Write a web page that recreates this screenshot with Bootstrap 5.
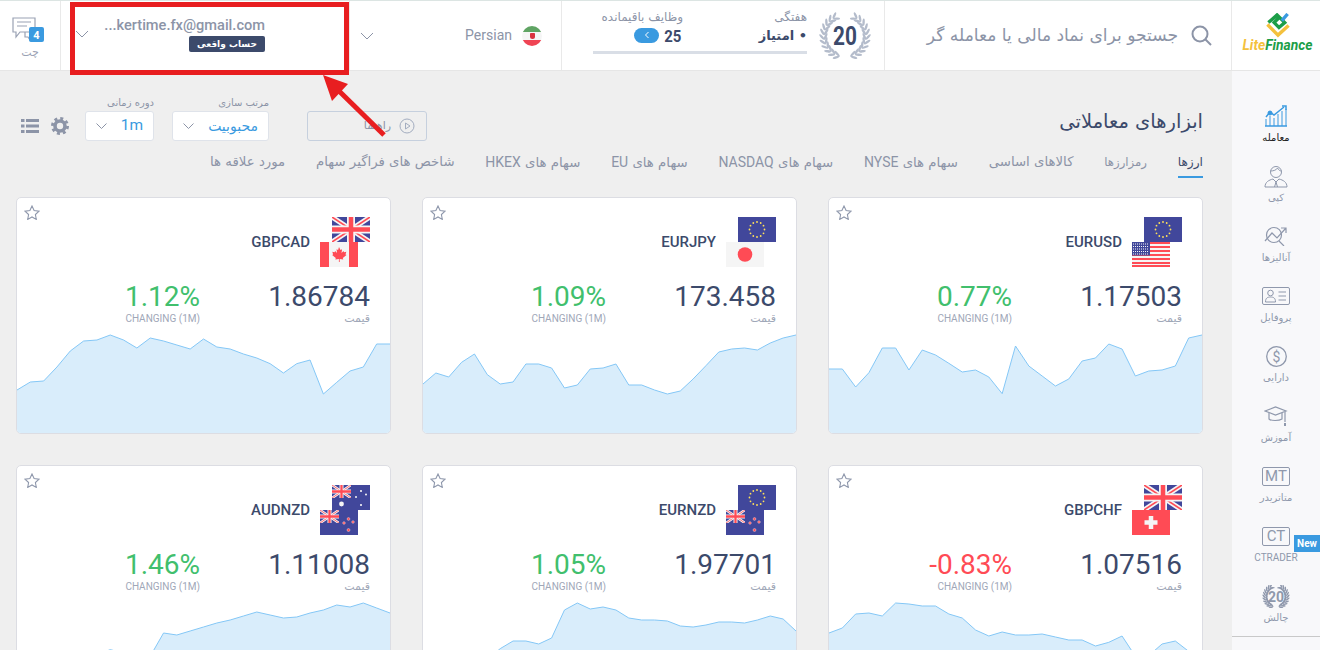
<!DOCTYPE html>
<html lang="fa">
<head>
    <meta charset="UTF-8">
    <title>LiteFinance</title>
    <link href="https://cdn.jsdelivr.net/npm/bootstrap@5.3.0/dist/css/bootstrap.min.css" rel="stylesheet">
    <style>
        html, body { height: 650px; overflow: hidden; }
        body { font-family: Roboto, "DejaVu Sans", sans-serif; background: #efefef; color: #3c4a6b; border-top: 1px solid #dce5e3; }
        .fa-txt { font-family: "DejaVu Sans", Roboto, sans-serif; }
        .latin-txt { font-family: Roboto, sans-serif; }

        /* header */
        .top-bar { height: 70px; background: #fff; border-bottom: 1px solid #e6e6e6; }
        .top-cell { border-right: 1px solid #e9e9e9; height: 100%; }
        .cell-chat { width: 61px; padding-top: 16px; }
        .cell-account { width: 289px; padding-left: 14px; padding-right: 84px; padding-bottom: 3px; }
        .cell-lang { width: 212px; padding-left: 10px; padding-right: 19px; }
        .cell-stats { width: 323px; padding: 9px 77px 0 31px; }
        .cell-search { width: 347px; padding-right: 19px; padding-left: 30px; gap: 13px; }
        .cell-logo { width: 88px; border-right: 0; padding-top: 12px; padding-left: 3px; }
        .chat-label { font-size: 11px; line-height: 14px; color: #9aa2b4; margin-top: 1px; }
        .chat-icon { width: 34px; height: 28px; margin-right: 4px; }
        .email-txt { font-size: 14.6px; font-weight: 500; color: #8c94a7; line-height: 18px; }
        .acc-tag { background: #3c4a6b; color: #fff; font-size: 9px; font-weight: 700; line-height: 16px; padding: 0 8px; border-radius: 2px; margin-top: 2px; }
        .lang-txt { font-size: 14px; color: #8c94a7; margin-right: 10px; }
        .flag-round { width: 20px; height: 20px; border-radius: 50%; background: linear-gradient(#5fa463 0 30%, #f5f5f5 30% 70%, #ef4454 70%); }
        .flag-mark { width: 5px; height: 6px; background: #d8323f; border-radius: 1px 1px 3px 3px; }
        .stat-small { font-size: 12px; line-height: 14px; color: #8c94a7; white-space: nowrap; }
        .stat-big { font-size: 13px; line-height: 20px; font-weight: 700; color: #3c4a6b; margin-top: 2px; }
        .stat-first { width: 124px; }
        .stat-num { display: inline-block; font-size: 17px; line-height: 20px; font-weight: 700; color: #3c4a6b; margin-top: 2px; transform: scaleX(.88); }
        .go-pill { width: 25px; height: 15px; border-radius: 8px; background: #3a9ae0; }
        .stat-track { height: 3px; background: #d9dee6; margin-top: 5px; }
        .wreath-box { width: 56px; height: 56px; right: 11px; top: 7px; }
        .wreath-num { font-size: 26px; font-weight: 700; color: #3c4a6b; line-height: 1; transform: scaleX(.8); }
        .search-txt { font-size: 17.1px; color: #8c94a7; white-space: nowrap; }
        .logo-txt { font-size: 13.8px; font-weight: 700; font-style: italic; line-height: 14px; margin-top: 0; }
        .logo-y { color: #f4c13d; }
        .logo-g { color: #1c9e48; }

        /* overlay */
        .red-frame { left: 70px; top: 2px; width: 279px; height: 73px; border: 5px solid #e81e20; }
        .red-arrow { left: 300px; top: 60px; width: 100px; height: 90px; }

        /* sidebar */
        .page-body { height: 579px; overflow: hidden; }
        .side-menu { width: 88px; background: #f8f8fa; padding-top: 30px; }
        .side-list { gap: 17px; padding-bottom: 12px; border-bottom: 1px solid #c9c9c9; }
        .side-item { height: 43px; color: #8f98ac; font-size: 10px; line-height: 13px; }
        .side-item.on { color: #222; }
        .side-ico { height: 30px; }
        .side-ico svg { display: block; }
        .term-box { width: 28px; height: 19px; border: 1px solid #8f98ac; border-radius: 2px; font-size: 15px; line-height: 17px; text-align: center; font-family: Roboto, sans-serif; }
        .new-tag { right: 0; top: 14px; width: 26px; height: 17px; background: #3a9ae0; color: #fff; font-size: 10px; font-weight: 700; line-height: 17px; text-align: center; font-family: Roboto, sans-serif; }

        /* main */
        .main-pane { width: 1232px; padding: 26px 29px 0 16px; }
        .tool-label { font-size: 10px; line-height: 12px; color: #8c94a7; margin-bottom: 2px; white-space: nowrap; }
        .tool-select { height: 30px; background: #fff; border: 1px solid #dfe3ea; border-radius: 3px; color: #3a9ae0; padding: 0 10px; }
        .list-ico { margin: 0 12px 8px 5px; }
        .gear-ico { margin: 0 16px 6px 0; }
        .sel-time { width: 69px; font-size: 15.5px; }
        .sel-sort { width: 97px; font-size: 14px; margin-left: 18px; }
        .help-btn { width: 120px; height: 30px; border: 1px solid #c6d0de; border-radius: 3px; margin-left: 38px; color: #8c94a7; font-size: 11px; padding-right: 11px; }
        .page-title { font-size: 19.5px; color: #3c4a6b; line-height: 30px; margin-top: 10px; }
        .tab-strip { gap: 30.8px; margin-top: 10px; font-size: 13.3px; }
        .tab-link { line-height: 20px; padding: 1px 0 3px; color: #8c94a7; border-bottom: 2px solid transparent; white-space: nowrap; }
        .tab-link .latin-txt { font-size: 14px; }
        .tab-link.on { color: #3c4a6b; border-bottom-color: #3a9ae0; }
        .tab-first { font-size: 12.2px; }
        .tab-second { font-size: 11.7px; }
        .card-grid { display: grid; grid-template-columns: repeat(3, 375px); gap: 31px; margin-top: 19px; }
        .inst-card { height: 237px; background: #fff; border: 1px solid #dcdde3; border-radius: 5px; overflow: hidden; }
        .inst-star { left: 7px; top: 7px; }
        .inst-head { padding: 19px 20px 0 0; gap: 10px; height: 69px; }
        .inst-name { font-size: 15px; font-weight: 500; color: #3c4a6b; }
        .flag-pair { width: 50px; height: 50px; }
        .flag-pair svg { display: block; width: 38px; height: 25px; }
        .inst-vals { padding: 13px 20px 0 0; height: 66px; }
        .inst-col { width: 170px; }
        .inst-num { font-size: 28px; line-height: 33px; color: #3c4a6b; }
        .inst-cap { font-size: 10px; line-height: 14px; color: #a0a7b8; margin-top: -1px; }
        .inst-cap.fa-txt { font-size: 11px; }
        .inst-chg { font-size: 28px; line-height: 33px; }
        .chg-up { color: #41bf6d; }
        .chg-down { color: #ff4b55; }
        .inst-chart { display: block; width: 100%; height: 100px; }
    </style>
</head>
<body>
    <!-- flag sprites -->
    <svg class="d-none" xmlns="http://www.w3.org/2000/svg">
        <symbol id="f-uj" viewBox="0 0 38 25" preserveAspectRatio="none">
            <rect width="38" height="25" fill="#41479b"/>
            <path d="M0 0L38 25M38 0L0 25" stroke="#f5f5f5" stroke-width="5"/>
            <path d="M0 0L38 25M38 0L0 25" stroke="#ff4b55" stroke-width="1.6"/>
            <path d="M19 0V25M0 12.5H38" stroke="#f5f5f5" stroke-width="8"/>
            <path d="M19 0V25M0 12.5H38" stroke="#ff4b55" stroke-width="4.5"/>
        </symbol>
        <symbol id="f-eu" viewBox="0 0 38 25">
            <rect width="38" height="25" fill="#41479b"/>
            <g fill="#ffe15a">
                <circle cx="19" cy="5" r=".9"/><circle cx="22.7" cy="6" r=".9"/><circle cx="25.5" cy="8.7" r=".9"/><circle cx="26.5" cy="12.5" r=".9"/>
                <circle cx="25.5" cy="16.3" r=".9"/><circle cx="22.7" cy="19" r=".9"/><circle cx="19" cy="20" r=".9"/><circle cx="15.3" cy="19" r=".9"/>
                <circle cx="12.5" cy="16.3" r=".9"/><circle cx="11.5" cy="12.5" r=".9"/><circle cx="12.5" cy="8.7" r=".9"/><circle cx="15.3" cy="6" r=".9"/>
            </g>
        </symbol>
        <symbol id="f-us" viewBox="0 0 38 25">
            <rect width="38" height="25" fill="#f5f5f5"/>
            <path d="M0 1H38M0 5H38M0 9H38M0 13H38M0 17H38M0 21H38M0 24H38" stroke="#ff4b55" stroke-width="2"/>
            <rect width="18" height="13.5" fill="#41479b"/>
            <path d="M1 2H17M1 4.5H17M1 7H17M1 9.5H17M1 12H17" stroke="#f5f5f5" stroke-width="1" stroke-dasharray="1 1"/>
        </symbol>
        <symbol id="f-jp" viewBox="0 0 38 25">
            <rect width="38" height="25" fill="#f5f5f5"/>
            <circle cx="19" cy="12.5" r="7.3" fill="#ff4b55"/>
        </symbol>
        <symbol id="f-ca" viewBox="0 0 38 25">
            <rect width="38" height="25" fill="#f5f5f5"/>
            <rect width="9" height="25" fill="#ff4b55"/><rect x="29" width="9" height="25" fill="#ff4b55"/>
            <path d="M19 5l1.500 3 1.600-.8-.6 3.700 2-2 .5 1.300 2.300-.4-.8 2.600 1 .6-3.700 3 .5 1.500-3.600-.5V20h-.8v-3l-3.600.5.500-1.500-3.700-3 1-.6-.8-2.600 2.300.4.500-1.300 2 2-.6-3.700 1.600.8z" fill="#ff4b55"/>
        </symbol>
        <symbol id="f-ch" viewBox="0 0 38 25">
            <rect width="38" height="25" fill="#ff4b55"/>
            <path d="M19 6V19M12.5 12.5H25.5" stroke="#f5f5f5" stroke-width="4.5"/>
        </symbol>
        <symbol id="f-nz" viewBox="0 0 38 25">
            <rect width="38" height="25" fill="#41479b"/>
            <use href="#f-uj" width="19" height="13"/>
            <g fill="#ff4b55" stroke="#f5f5f5" stroke-width=".4">
                <circle cx="28.5" cy="9" r="1.4"/><circle cx="24" cy="13" r="1.3"/><circle cx="33" cy="12" r="1.3"/><circle cx="28.5" cy="20" r="1.5"/>
            </g>
        </symbol>
        <symbol id="f-au" viewBox="0 0 38 25">
            <rect width="38" height="25" fill="#41479b"/>
            <use href="#f-uj" width="19" height="13"/>
            <g fill="#f5f5f5">
                <circle cx="9.5" cy="19" r="2.4"/><circle cx="29" cy="6" r="1.1"/><circle cx="24" cy="12" r="1"/><circle cx="34" cy="9.5" r="1"/><circle cx="29" cy="20" r="1.1"/>
            </g>
        </symbol>
    </svg>

    <!-- Header -->
    <header class="top-bar d-flex">
        <div class="top-cell cell-chat d-flex flex-column align-items-center">
            <svg class="chat-icon" viewBox="0 0 34 28" fill="none" stroke="#9aa2b4" stroke-width="1.200">
                <path d="M2 1h22v14H9l-4 5v-5H2z" fill="#fff"/>
                <path d="M6 5h14M6 9h10"/>
                <path d="M14 15v5h3l2 3v-3h12v-8h-6"/>
                <rect x="18" y="10" width="15" height="15" rx="2" fill="#3a9ae0" stroke="none"/>
                <text x="25.500" y="22" font-size="11" font-weight="700" fill="#fff" stroke="none" text-anchor="middle" font-family="Roboto">4</text>
            </svg>
            <div class="chat-label fa-txt">چت</div>
        </div>
        <div class="top-cell cell-account d-flex align-items-center">
            <svg width="14" height="8" viewBox="0 0 14 8" fill="none" stroke="#8c94a7" class="me-auto"><path d="M1 1l6 6 6-6"/></svg>
            <div class="d-flex flex-column align-items-end">
                <div class="email-txt">...kertime.fx@gmail.com</div>
                <div class="acc-tag fa-txt" dir="rtl">حساب واقعی</div>
            </div>
        </div>
        <div class="top-cell cell-lang d-flex align-items-center">
            <svg width="14" height="8" viewBox="0 0 14 8" fill="none" stroke="#8c94a7" class="me-auto"><path d="M1 1l6 6 6-6"/></svg>
            <span class="lang-txt">Persian</span>
            <span class="flag-round d-flex align-items-center justify-content-center"><span class="flag-mark"></span></span>
        </div>
        <div class="top-cell cell-stats d-flex position-relative">
            <div class="flex-grow-1 d-flex flex-column">
                <div class="d-flex" dir="rtl">
                    <div class="stat-first">
                        <div class="stat-small fa-txt">هفتگی</div>
                        <div class="stat-big fa-txt">• امتیاز</div>
                    </div>
                    <div>
                        <div class="stat-small fa-txt">وظایف باقیمانده</div>
                        <div class="d-flex align-items-center gap-1">
                            <span class="stat-num">25</span>
                            <span class="go-pill d-flex align-items-center justify-content-center">
                                <svg width="6" height="8" viewBox="0 0 6 8" fill="none" stroke="#fff"><path d="M4.500 1L1.500 4l3 3"/></svg>
                            </span>
                        </div>
                    </div>
                </div>
                <div class="stat-track"></div>
            </div>
            <div class="wreath-box position-absolute d-flex align-items-center justify-content-center">
                <svg class="position-absolute" width="56" height="56" viewBox="0 0 56 56" id="topWreath"></svg>
                <span class="wreath-num position-relative">20</span>
            </div>
        </div>
        <div class="top-cell cell-search d-flex align-items-center justify-content-end">
            <span class="search-txt fa-txt" dir="rtl">جستجو برای نماد مالی یا معامله گر</span>
            <svg width="21" height="21" viewBox="0 0 21 21" fill="none" stroke="#8c94a7" stroke-width="2"><circle cx="9" cy="9" r="7.500"/><path d="M14.500 14.500L20 20"/></svg>
        </div>
        <div class="top-cell cell-logo d-flex flex-column align-items-center">
            <svg width="28" height="25" viewBox="0 0 28 26" fill="none" stroke-width="3.500">
                <path d="M3 12l11 11 11-10" stroke="#f4c13d"/>
                <path d="M4 10l9-8 8 8-6 5-5-5 5-5" stroke="#1c9e48"/>
                <path d="M18 8l6-7" stroke="#3a9ae0"/>
            </svg>
            <div class="logo-txt"><span class="logo-y">Lite</span><span class="logo-g">Finance</span></div>
        </div>
    </header>

    <div class="page-body d-flex">
        <main class="main-pane">
            <div class="d-flex align-items-start justify-content-between">
                <div class="d-flex align-items-end">
                    <svg width="18" height="14" viewBox="0 0 18 14" fill="#8c94a7" class="list-ico">
                        <rect width="3.500" height="3"/><rect x="5" width="13" height="3"/>
                        <rect y="5.500" width="3.500" height="3"/><rect x="5" y="5.500" width="13" height="3"/>
                        <rect y="11" width="3.500" height="3"/><rect x="5" y="11" width="13" height="3"/>
                    </svg>
                    <svg width="18" height="18" viewBox="0 0 18 18" fill="none" stroke="#8c94a7" class="gear-ico">
                        <circle cx="9" cy="9" r="5" stroke-width="3.600"/>
                        <circle cx="9" cy="9" r="7.600" stroke-width="2.800" stroke-dasharray="3 2.970"/>
                    </svg>
                    <div>
                        <div class="tool-label fa-txt text-end">دوره زمانی</div>
                        <div class="tool-select sel-time d-flex align-items-center justify-content-between">
                            <svg width="11" height="6" viewBox="0 0 11 6" fill="none" stroke="#8c94a7"><path d="M.5.5l5 5 5-5"/></svg>
                            <span>1m</span>
                        </div>
                    </div>
                    <div>
                        <div class="tool-label fa-txt text-end">مرتب سازی</div>
                        <div class="tool-select sel-sort d-flex align-items-center justify-content-between">
                            <svg width="11" height="6" viewBox="0 0 11 6" fill="none" stroke="#8c94a7"><path d="M.5.5l5 5 5-5"/></svg>
                            <span class="fa-txt">محبوبیت</span>
                        </div>
                    </div>
                    <div class="help-btn d-flex align-items-center justify-content-end gap-2">
                        <span class="fa-txt">راهنما</span>
                        <svg width="16" height="16" viewBox="0 0 16 16" fill="none" stroke="#a3adc0"><circle cx="8" cy="8" r="7"/><path d="M6.500 5v6l4.500-3z"/></svg>
                    </div>
                </div>
                <div class="page-title fa-txt" dir="rtl">ابزارهای معاملاتی</div>
            </div>

            <nav class="tab-strip d-flex fa-txt" dir="rtl">
                <span class="tab-link tab-first on">ارزها</span>
                <span class="tab-link tab-second">رمزارزها</span>
                <span class="tab-link">کالاهای اساسی</span>
                <span class="tab-link">سهام های <span class="latin-txt">NYSE</span></span>
                <span class="tab-link">سهام های <span class="latin-txt">NASDAQ</span></span>
                <span class="tab-link">سهام های <span class="latin-txt">EU</span></span>
                <span class="tab-link">سهام های <span class="latin-txt">HKEX</span></span>
                <span class="tab-link">شاخص های فراگیر سهام</span>
                <span class="tab-link">مورد علاقه ها</span>
            </nav>

            <div class="card-grid" dir="rtl" id="cardGrid"></div>
        </main>

        <aside class="side-menu">
            <div class="side-list d-flex flex-column fa-txt">
                <div class="side-item on d-flex flex-column align-items-center">
                    <div class="side-ico d-flex align-items-center">
                        <svg width="24" height="22" viewBox="0 0 24 22" fill="none" stroke="#3a9ae0">
                            <path d="M2 21V14M6 21V11M10 21V13M14 21V9M18 21V6M22 21V4"/>
                            <path d="M1 21H23" stroke-width="1.500"/>
                            <path d="M2 12l4-5 4 3 10-8" stroke-width="1.500"/>
                            <path d="M18 1h4v4" stroke-width="1.500"/>
                            <circle cx="6" cy="8" r="2" fill="#3a9ae0"/>
                        </svg>
                    </div>
                    <div>معامله</div>
                </div>
                <div class="side-item d-flex flex-column align-items-center">
                    <div class="side-ico d-flex align-items-center">
                        <svg width="24" height="23" viewBox="0 0 24 23" fill="none" stroke="#8f98ac">
                            <circle cx="12" cy="7" r="5.500"/>
                            <path d="M6.500 6c3 0 6-1 7-3 1 2 2.500 3 4 3"/>
                            <path d="M1 22c0-5 4-7 8-8l3 3 3-3c4 1 8 3 8 8z"/>
                            <path d="M12 17l-1.500 5M12 17l1.500 5"/>
                        </svg>
                    </div>
                    <div>کپی</div>
                </div>
                <div class="side-item d-flex flex-column align-items-center">
                    <div class="side-ico d-flex align-items-center">
                        <svg width="24" height="20" viewBox="0 0 24 20" fill="none" stroke="#8f98ac" stroke-width="1.200">
                            <circle cx="10" cy="9" r="7.500"/>
                            <path d="M1 15l7-8 5 5 9-10M17 2h5v5M15 15l5 5"/>
                        </svg>
                    </div>
                    <div>آنالیزها</div>
                </div>
                <div class="side-item d-flex flex-column align-items-center">
                    <div class="side-ico d-flex align-items-center">
                        <svg width="28" height="18" viewBox="0 0 28 18" fill="none" stroke="#8f98ac">
                            <rect x=".5" y=".5" width="27" height="17" rx="1.500"/>
                            <circle cx="8.500" cy="6" r="2.800"/>
                            <path d="M3.500 15c0-4 2-5 5-5s5 1 5 5z"/>
                            <path d="M16.500 5H24M16.500 9H24M16.500 13H24"/>
                        </svg>
                    </div>
                    <div>پروفایل</div>
                </div>
                <div class="side-item d-flex flex-column align-items-center">
                    <div class="side-ico d-flex align-items-center">
                        <svg width="21" height="21" viewBox="0 0 21 21" fill="none" stroke="#8f98ac" stroke-width="1.300">
                            <circle cx="10.500" cy="10.500" r="9.800"/>
                            <text x="10.500" y="15.500" font-size="14" text-anchor="middle" fill="#8f98ac" stroke="none" font-family="Roboto">$</text>
                        </svg>
                    </div>
                    <div>دارایی</div>
                </div>
                <div class="side-item d-flex flex-column align-items-center">
                    <div class="side-ico d-flex align-items-center">
                        <svg width="24" height="21" viewBox="0 0 24 21" fill="none" stroke="#8f98ac" stroke-width="1.200">
                            <path d="M1 5l10.500-4L22 5l-10.500 4z"/>
                            <path d="M5 7v6c2 2 10 2 13 0V7"/>
                            <path d="M21 6v10"/><path d="M21 17v3" stroke-width="2"/>
                        </svg>
                    </div>
                    <div>آموزش</div>
                </div>
                <div class="side-item d-flex flex-column align-items-center">
                    <div class="side-ico d-flex align-items-center"><div class="term-box">MT</div></div>
                    <div>متاتریدر</div>
                </div>
                <div class="side-item d-flex flex-column align-items-center position-relative">
                    <div class="side-ico d-flex align-items-center"><div class="term-box">CT</div></div>
                    <div class="latin-txt">CTRADER</div>
                    <span class="new-tag position-absolute">New</span>
                </div>
                <div class="side-item d-flex flex-column align-items-center">
                    <div class="side-ico d-flex align-items-center">
                        <svg width="30" height="23" viewBox="0 0 30 23" id="sideWreath">
                            <text x="15" y="17" font-size="14" font-weight="700" text-anchor="middle" fill="#8f98ac" font-family="Roboto">20</text>
                        </svg>
                    </div>
                    <div>چالش</div>
                </div>
            </div>
        </aside>
    </div>

    <!-- annotation over the account cell -->
    <div class="red-frame position-absolute"></div>
    <svg class="red-arrow position-absolute" viewBox="300 60 100 90">
        <path d="M384 135L338 90" stroke="#e81e20" stroke-width="5"/>
        <polygon points="323,75 348,84 332,101" fill="#e81e20"/>
    </svg>

    <script>
        // zoomed-crop pixel values: x is spread evenly, y is read from the reference at 3x
        const cards = [
            { name: 'EURUSD', a: 'eu', b: 'us', price: '1.17503', chg: '0.77%', up: true,
              ys: [538,538,592,549,475,475,541,481,496,521,547,541,562,612,469,529,559,589,568,514,505,463,478,559,544,541,529,445,436] },
            { name: 'EURJPY', a: 'eu', b: 'jp', price: '173.458', chg: '1.09%', up: true,
              ys: [583,550,562,518,493,555,583,577,523,523,535,595,586,538,535,523,586,586,601,613,604,568,528,487,478,475,481,460,445,436] },
            { name: 'GBPCAD', a: 'uj', b: 'ca', price: '1.86784', chg: '1.12%', up: true,
              ys: [601,577,574,532,484,454,451,436,451,475,445,454,466,478,448,472,478,493,505,522,550,522,511,613,578,544,532,463,463] },
            { name: 'GBPCHF', a: 'uj', b: 'ch', price: '1.07516', chg: '-0.83%', up: false, off: 6,
              ys: [520,505,463,460,469,430,433,439,439,463,475,511,529,517,526,526,523,532,541,541,559,548,529,590,588,553,544,575,600] },
            { name: 'EURNZD', a: 'eu', b: 'nz', price: '1.97701', chg: '1.05%', up: true, off: 6,
              ys: [640,650,640,630,620,600,567,544,544,553,535,451,430,448,442,451,475,481,481,484,499,502,496,487,487,490,481,469,478,514] },
            { name: 'AUDNZD', a: 'au', b: 'nz', price: '1.11008', chg: '1.46%', up: true, off: 6,
              ys: [650,640,630,620,610,600,585,570,580,590,590,520,526,514,502,490,481,469,457,466,475,472,460,451,436,442,430,445,460] }
        ];

        function chartMarkup(c) {
            const off = c.off || 0;
            const step = 1125 / (c.ys.length - 1);
            const pts = c.ys.map((y, i) => (i * step).toFixed(1) + ',' + (y + off - 430)).join(' ');
            return `<svg class="inst-chart" viewBox="0 0 1125 300" preserveAspectRatio="none">
                <polygon points="0,300 ${pts} 1125,300" fill="#d9edfb"/>
                <polyline points="${pts}" fill="none" stroke="#84c7f6" stroke-width="3"/>
            </svg>`;
        }

        document.getElementById('cardGrid').innerHTML = cards.map(c => `
            <div class="inst-card position-relative" dir="ltr">
                <svg class="inst-star position-absolute" width="16" height="15" viewBox="0 0 16 15" fill="none" stroke="#8f98ac" stroke-width="1.100">
                    <path d="M8 1l2.100 4.500 4.900.6-3.600 3.400.9 4.900L8 11.900 3.700 14.400l.9-4.900L1 6.100l4.900-.6z"/>
                </svg>
                <div class="inst-head d-flex justify-content-end align-items-center">
                    <div class="inst-name">${c.name}</div>
                    <div class="flag-pair d-flex flex-column">
                        <svg class="align-self-end"><use href="#f-${c.a}"/></svg>
                        <svg class="align-self-start"><use href="#f-${c.b}"/></svg>
                    </div>
                </div>
                <div class="inst-vals d-flex justify-content-end text-end">
                    <div class="inst-col">
                        <div class="inst-chg ${c.up ? 'chg-up' : 'chg-down'}">${c.chg}</div>
                        <div class="inst-cap">CHANGING (1M)</div>
                    </div>
                    <div class="inst-col">
                        <div class="inst-num">${c.price}</div>
                        <div class="inst-cap fa-txt">قیمت</div>
                    </div>
                </div>
                ${chartMarkup(c)}
            </div>`).join('');

        // laurel leaves for the two "20" wreaths, open at the top
        function addLeaves(svg, cx, cy, r, size, color) {
            let out = '';
            for (const side of [-1, 1]) {
                for (let a = 35; a <= 172; a += 13) {
                    const rad = a * Math.PI / 180;
                    const x = cx + side * r * Math.sin(rad);
                    const y = cy - r * Math.cos(rad);
                    [-32, 32].forEach(t => {
                        const rot = side * a + t;
                        const lx = (x + Math.cos(rot * Math.PI / 180) * size * -side).toFixed(1);
                        const ly = (y + Math.sin(rot * Math.PI / 180) * size * -side).toFixed(1);
                        out += `<ellipse cx="${lx}" cy="${ly}" rx="${size}" ry="${(size / 3).toFixed(1)}" fill="${color}" transform="rotate(${rot} ${lx} ${ly})"/>`;
                    });
                }
            }
            svg.insertAdjacentHTML('afterbegin', out);
        }
        addLeaves(document.getElementById('sideWreath'), 15, 11.5, 10.5, 2.4, '#8f98ac');
        addLeaves(document.getElementById('topWreath'), 28, 28, 21, 3.6, '#b4bccb');
    </script>
    <script src="https://cdn.jsdelivr.net/npm/bootstrap@5.3.0/dist/js/bootstrap.bundle.min.js"></script>
</body>
</html>
